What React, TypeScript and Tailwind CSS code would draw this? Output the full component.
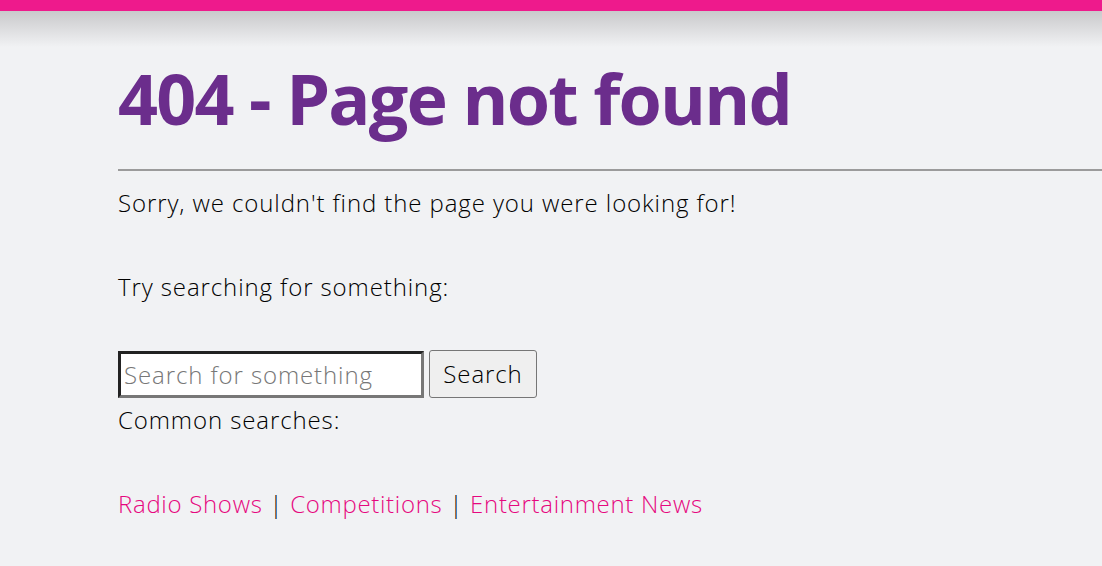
import React from 'react';

const App = () => {
  return (
    <div className="min-h-[566px] bg-[#f1f2f4] text-black overflow-hidden" style={{ fontFamily: '"Open Sans", "Noto Sans", sans-serif' }}>
      <div className="h-[11px] bg-[#ee1a8c]" />
      <div className="h-[36px] bg-gradient-to-b from-[#c9c9cb] to-[#f1f2f4]" />
      <div className="pl-[118px]">
        <h1 className="text-[70px] leading-[70px] font-bold text-[#6b2d8c] tracking-[-1.8px] mt-[16px]">404 - Page not found</h1>
        <hr className="mt-[36px] border-t-2 border-[#9b9b9b]" />
        <p className="text-[24px] leading-[34px] font-light tracking-[0.9px] mt-[15px]">Sorry, we couldn't find the page you were looking for!</p>
        <p className="text-[24px] leading-[34px] font-light tracking-[0.9px] mt-[50px]">Try searching for something:</p>
        <form className="flex items-center gap-[5px] mt-[46px]" onSubmit={(e) => e.preventDefault()}>
          <input
            type="text"
            placeholder="Search for something"
            className="w-[306px] h-[47px] bg-white border-[3px] border-t-[#222] border-l-[#222] border-b-[#777] border-r-[#777] px-[3px] text-[24px] font-light tracking-[0.9px] placeholder:text-[#777] outline-none"
          />
          <button type="submit" className="w-[108px] h-[48px] bg-[#efefef] border border-[#767676] rounded-[3px] text-[24px] font-light tracking-[0.9px]">Search</button>
        </form>
        <p className="text-[24px] leading-[34px] font-light tracking-[0.9px] mt-[5px]">Common searches:</p>
        <p className="text-[24px] leading-[34px] font-light tracking-[0.7px] mt-[50px]">
          <a href="#" className="text-[#e6087f]">Radio Shows</a> | <a href="#" className="text-[#e6087f]">Competitions</a> | <a href="#" className="text-[#e6087f]">Entertainment News</a>
        </p>
      </div>
    </div>
  );
};

export default App;
